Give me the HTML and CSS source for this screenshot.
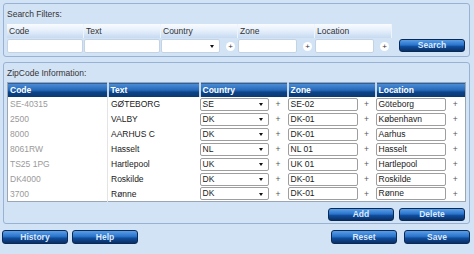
FILE: index.html
```html
<!DOCTYPE html>
<html lang="en">
<head>
    <meta charset="UTF-8">
    <title>ZipCodes</title>
    <link rel="stylesheet" href="styles.css">
</head>
<body>

    <!-- Search Filters -->
    <div class="panel filters">
        <div class="legend">Search Filters:</div>
        <div class="filter-row">
            <div class="filter-grid">
                <div class="fhead">Code</div>
                <div class="fhead">Text</div>
                <div class="fhead">Country</div>
                <div class="fhead">Zone</div>
                <div class="fhead">Location</div>

                <div class="fcell"><div class="box wide"></div></div>
                <div class="fcell"><div class="box wide"></div></div>
                <div class="fcell"><div class="box sel"><span class="arrow"></span></div><span class="round">+</span></div>
                <div class="fcell"><div class="box"></div><span class="round">+</span></div>
                <div class="fcell"><div class="box"></div><span class="round">+</span></div>
            </div>
            <button class="btn search">Search</button>
        </div>
    </div>

    <!-- ZipCode Information -->
    <div class="panel info">
        <div class="legend">ZipCode Information:</div>
        <table class="grid">
            <thead>
                <tr>
                    <th class="c-code">Code</th>
                    <th class="c-text">Text</th>
                    <th class="c-country">Country</th>
                    <th class="c-zone">Zone</th>
                    <th class="c-loc">Location</th>
                </tr>
            </thead>
            <tbody>
                <tr>
                    <td class="code">SE-40315</td><td class="txt">GØTEBORG</td>
                    <td><div class="cell"><div class="field sel">SE<span class="arrow"></span></div><span class="plus">+</span></div></td>
                    <td><div class="cell"><div class="field">SE-02</div><span class="plus">+</span></div></td>
                    <td><div class="cell"><div class="field">Göteborg</div><span class="plus">+</span></div></td>
                </tr>
                <tr>
                    <td class="code">2500</td><td class="txt">VALBY</td>
                    <td><div class="cell"><div class="field sel">DK<span class="arrow"></span></div><span class="plus">+</span></div></td>
                    <td><div class="cell"><div class="field">DK-01</div><span class="plus">+</span></div></td>
                    <td><div class="cell"><div class="field">København</div><span class="plus">+</span></div></td>
                </tr>
                <tr>
                    <td class="code">8000</td><td class="txt">AARHUS C</td>
                    <td><div class="cell"><div class="field sel">DK<span class="arrow"></span></div><span class="plus">+</span></div></td>
                    <td><div class="cell"><div class="field">DK-01</div><span class="plus">+</span></div></td>
                    <td><div class="cell"><div class="field">Aarhus</div><span class="plus">+</span></div></td>
                </tr>
                <tr>
                    <td class="code">8061RW</td><td class="txt">Hasselt</td>
                    <td><div class="cell"><div class="field sel">NL<span class="arrow"></span></div><span class="plus">+</span></div></td>
                    <td><div class="cell"><div class="field">NL 01</div><span class="plus">+</span></div></td>
                    <td><div class="cell"><div class="field">Hasselt</div><span class="plus">+</span></div></td>
                </tr>
                <tr>
                    <td class="code">TS25 1PG</td><td class="txt">Hartlepool</td>
                    <td><div class="cell"><div class="field sel">UK<span class="arrow"></span></div><span class="plus">+</span></div></td>
                    <td><div class="cell"><div class="field">UK 01</div><span class="plus">+</span></div></td>
                    <td><div class="cell"><div class="field">Hartlepool</div><span class="plus">+</span></div></td>
                </tr>
                <tr>
                    <td class="code">DK4000</td><td class="txt">Roskilde</td>
                    <td><div class="cell"><div class="field sel">DK<span class="arrow"></span></div><span class="plus">+</span></div></td>
                    <td><div class="cell"><div class="field">DK-01</div><span class="plus">+</span></div></td>
                    <td><div class="cell"><div class="field">Roskilde</div><span class="plus">+</span></div></td>
                </tr>
                <tr>
                    <td class="code">3700</td><td class="txt">Rønne</td>
                    <td><div class="cell"><div class="field sel">DK<span class="arrow"></span></div><span class="plus">+</span></div></td>
                    <td><div class="cell"><div class="field">DK-01</div><span class="plus">+</span></div></td>
                    <td><div class="cell"><div class="field">Rønne</div><span class="plus">+</span></div></td>
                </tr>
            </tbody>
        </table>
        <div class="actions">
            <button class="btn">Add</button>
            <button class="btn">Delete</button>
        </div>
    </div>

    <!-- Bottom Bar -->
    <div class="bottom">
        <div class="group">
            <button class="btn">History</button>
            <button class="btn">Help</button>
        </div>
        <div class="group right">
            <button class="btn">Reset</button>
            <button class="btn save">Save</button>
        </div>
    </div>

</body>
</html>
```

FILE: styles.css
```css
/* Global Reset */
* {
    margin: 0;
    padding: 0;
    box-sizing: border-box;
}

body {
    font-family: 'Liberation Sans', Arial, sans-serif;
    font-size: 8.5px;
    color: #222;
    background: #d3e3f6;
    padding: 3px 4px 0 2px;
    width: 474px;
    height: 254px;
    overflow: hidden;
}

/* Fieldset look */
.panel {
    margin-left: 1px;
    border: 1px solid #98b2d3;
    border-radius: 3px;
    padding: 4px 3px 3px 3px;
}

.legend {
    height: 13px;
    line-height: 13px;
    color: #333;
    margin-bottom: 3px;
}

/* Filters */
.filter-row {
    display: flex;
    align-items: flex-end;
}

.filter-grid {
    display: grid;
    grid-template-columns: repeat(5, 77px);
    grid-template-rows: 14px 14px;
    row-gap: 1px;
}

.fhead {
    background: linear-gradient(#fafcff, #e4eefa 50%, #c6daf1);
    border-right: 1px solid #eef4fb;
    line-height: 14px;
    padding-left: 2px;
    color: #333;
}

.fcell {
    display: flex;
    align-items: center;
}

.box {
    width: 59px;
    height: 14px;
    background: #fff;
    border: 1px solid #c4d3e4;
    border-radius: 2px;
    position: relative;
}

.box.wide {
    width: 76px;
}

.round {
    width: 9px;
    height: 9px;
    margin-left: 6px;
    border-radius: 50%;
    background: #fff;
    color: #333;
    font-size: 8px;
    line-height: 9px;
    text-align: center;
}

.arrow {
    position: absolute;
    right: 5px;
    top: 50%;
    margin-top: -1px;
    border-left: 2.5px solid transparent;
    border-right: 2.5px solid transparent;
    border-top: 3px solid #111;
}

/* Buttons */
.btn {
    width: 66px;
    height: 13px;
    border: 1px solid #0a2a55;
    border-radius: 3px;
    background: linear-gradient(#5b9ee6, #2a74cc 45%, #0f4c9a 60%, #0a2f66);
    color: #dce9ff;
    font-family: 'Liberation Sans', Arial, sans-serif;
    font-size: 8.5px;
    font-weight: bold;
    line-height: 11px;
    cursor: pointer;
}

.search {
    margin-left: auto;
    margin-right: 1px;
    margin-bottom: 1px;
}

/* ZipCode table */
.info {
    margin-top: 5px;
    padding-bottom: 2px;
}

.info .legend {
    margin-bottom: 2px;
}

.grid {
    width: 458px;
    border-collapse: collapse;
    table-layout: fixed;
    background: #fff;
    border: 1px solid #9aa6b4;
}

.grid th {
    height: 14px;
    text-align: left;
    padding-left: 2px;
    color: #fff;
    font-weight: bold;
    background: linear-gradient(#4f8fd6, #2366b8 50%, #0c4587 60%, #0a3671);
    border-left: 2px solid #c9d7e8;
}

.grid th:first-child {
    border-left: none;
}

.c-code { width: 100px; }
.c-text { width: 92px; }
.c-country { width: 88px; }
.c-zone { width: 88px; }
.c-loc { width: 90px; }

.grid td {
    height: 15px;
    padding: 0;
    white-space: nowrap;
}

.grid td.code {
    color: #9a9a9a;
    padding-left: 2px;
    border-right: 1px solid #e4e4e4;
}

.grid td.txt {
    color: #1a1a1a;
    padding-left: 3px;
}

.cell {
    display: flex;
    align-items: center;
}

.field {
    flex: 0 0 70px;
    height: 13px;
    line-height: 11px;
    padding-left: 2px;
    border: 1px solid #9e9e9e;
    border-radius: 2px;
    background: #fff;
    color: #1a1a1a;
    position: relative;
}

.field.sel {
    flex-basis: 69px;
}

.plus {
    flex: 1;
    text-align: center;
    color: #555;
}

.actions {
    display: flex;
    justify-content: flex-end;
    gap: 5px;
    margin-top: 6px;
    padding-right: 1px;
}

/* Bottom bar */
.bottom {
    display: flex;
    justify-content: space-between;
    margin-top: 6px;
}

.bottom .btn {
    height: 14px;
}

.group {
    display: flex;
    gap: 4px;
}

.group.right {
    gap: 7px;
}
```
